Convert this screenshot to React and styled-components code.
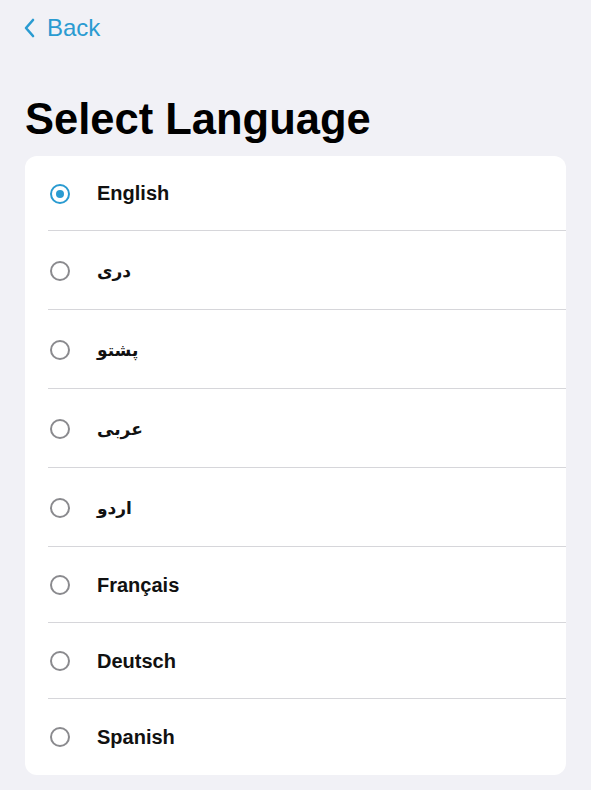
import React from 'react'
import styled, { createGlobalStyle } from 'styled-components'

const languages = [
    { label: 'English', rtl: false },
    { label: 'دری', rtl: true },
    { label: 'پشتو', rtl: true },
    { label: 'عربی', rtl: true },
    { label: 'اردو', rtl: true },
    { label: 'Français', rtl: false },
    { label: 'Deutsch', rtl: false },
    { label: 'Spanish', rtl: false },
]

const Global = createGlobalStyle`
    html, body {
        margin: 0;
        padding: 0;
        background: #f1f1f6;
        font-family: "Liberation Sans", Arial, "DejaVu Sans", sans-serif;
    }
`

const App = () => {
    let selected = 'English'

    return (
        <Page>
            <Global />
            <BackLink>
                <svg width="14" height="22" viewBox="0 0 14 22">
                    <path d="M10 3 L3 11 L10 19" fill="none" stroke="#2a9bd1" strokeWidth="2.6" strokeLinecap="round" strokeLinejoin="round" />
                </svg>
                <span>Back</span>
            </BackLink>
            <Title>Select Language</Title>
            <Card>
                {
                    languages.map((item, index) => (
                        <Row key={index} tall={item.rtl}>
                            <Radio checked={item.label === selected} />
                            <Label rtl={item.rtl}>{item.label}</Label>
                        </Row>
                    ))
                }
            </Card>
        </Page>
    )
}

const Page = styled.div`
    width: 591px;
    min-height: 790px;
    box-sizing: border-box;
    padding: 13px 25px 16px 25px;
    display: flex;
    flex-direction: column;
`

const BackLink = styled.div`
    display: flex;
    align-items: center;
    gap: 10px;
    color: #2a9bd1;
    font-size: 24px;
    height: 30px;
    margin-left: -2px;
    span {
        margin-top: -1px;
    }
`

const Title = styled.h1`
    margin: 51px 0 0 0;
    font-size: 43.5px;
    font-weight: bold;
    color: #000;
    line-height: 50px;
`

const Card = styled.div`
    margin-top: 12px;
    width: 541px;
    background: #fff;
    border-radius: 12px;
    overflow: hidden;
    display: flex;
    flex-direction: column;
`

const Row = styled.div`
    position: relative;
    height: ${props => props.tall ? 79 : 76}px;
    display: flex;
    align-items: center;
    padding-left: 25px;
    gap: 27px;
    &:not(:last-child):after {
        content: '';
        position: absolute;
        left: 23px;
        right: 0;
        bottom: 0;
        height: 1px;
        background: #d6d6da;
    }
    &:first-child {
        height: 75px;
    }
`

const Radio = styled.div`
    width: 20px;
    height: 20px;
    box-sizing: border-box;
    border-radius: 50%;
    border: 2px solid ${props => props.checked ? '#2a9bd1' : '#8a8a8e'};
    display: flex;
    align-items: center;
    justify-content: center;
    flex-shrink: 0;
    &:after {
        content: '';
        width: 8px;
        height: 8px;
        border-radius: 50%;
        background: ${props => props.checked ? '#2a9bd1' : 'transparent'};
    }
`

const Label = styled.div`
    font-size: ${props => props.rtl ? 17 : 20}px;
    font-weight: bold;
    color: #111;
    font-family: ${props => props.rtl ? '"DejaVu Sans", sans-serif' : '"Liberation Sans", Arial, sans-serif'};
    direction: ${props => props.rtl ? 'rtl' : 'ltr'};
`

export default App
